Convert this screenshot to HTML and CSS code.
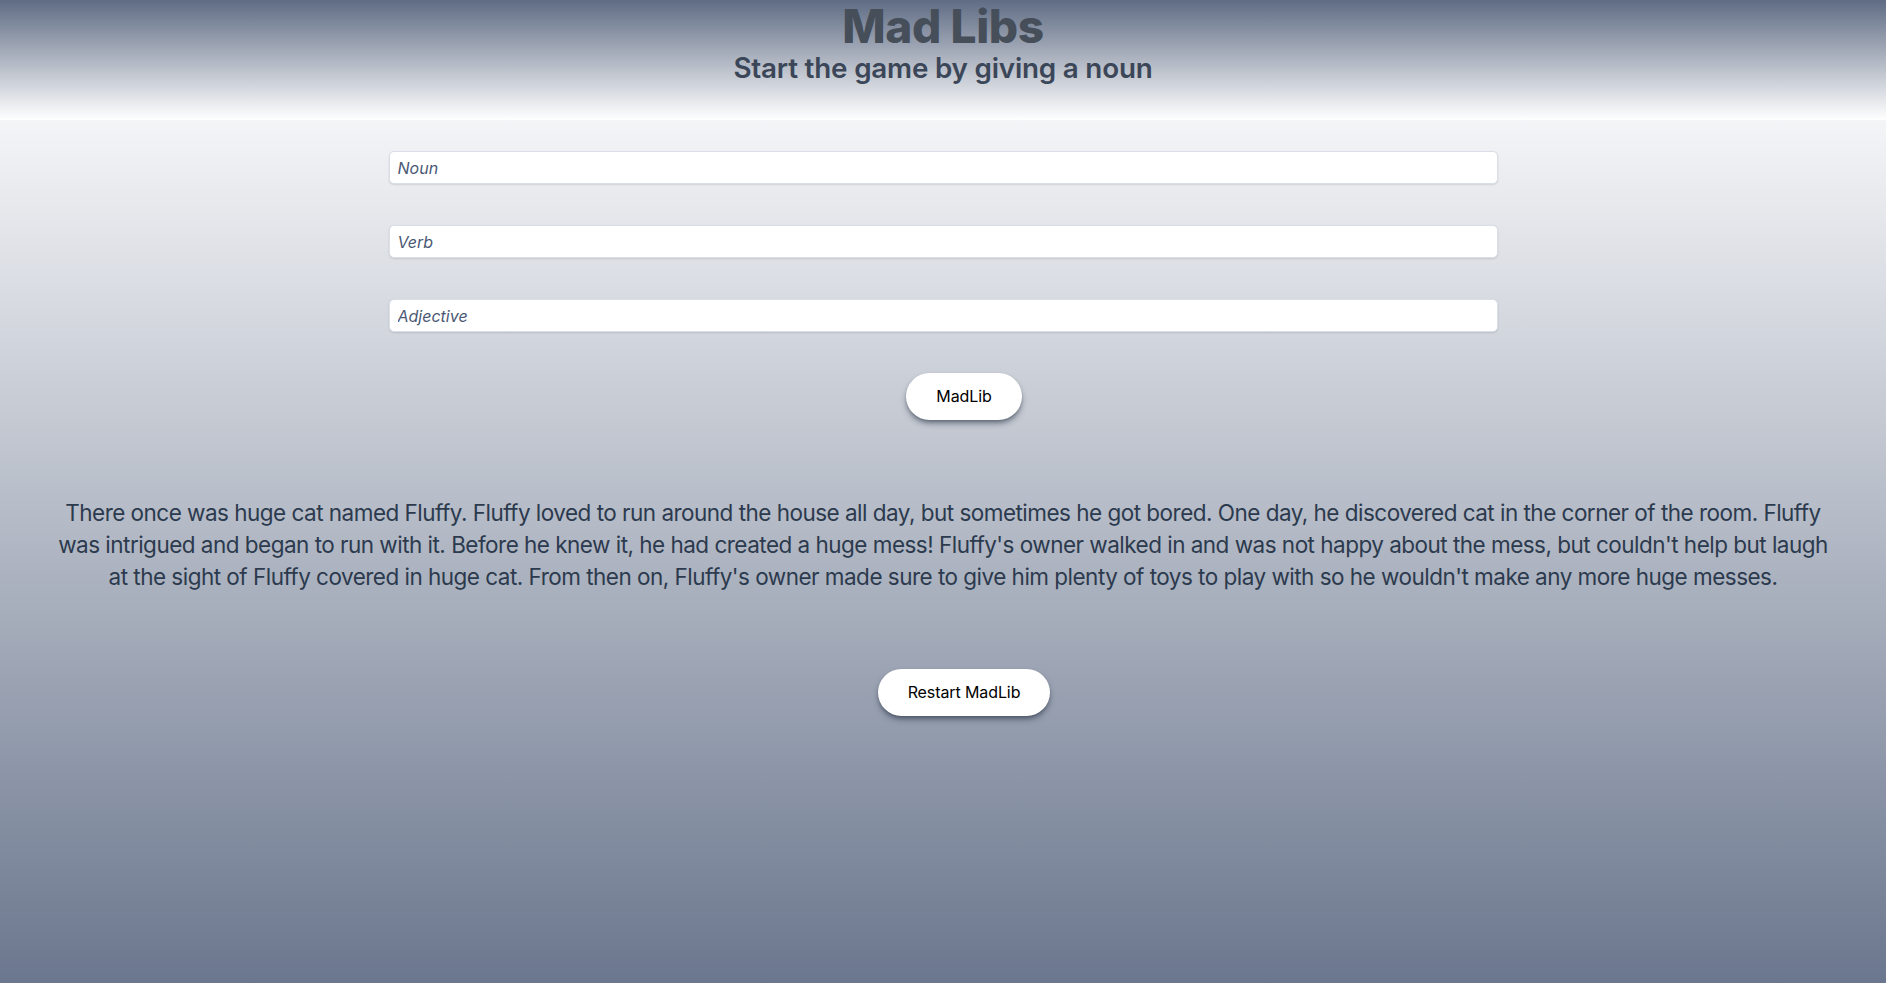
FILE: index.html
```html
<!DOCTYPE html>
<html lang="en">
<head>
<meta charset="utf-8">
<title>Mad Libs</title>
<link rel="stylesheet" href="styles.css">
</head>
<body>
<header class="header">
  <h1 class="title">Mad Libs</h1>
  <h2 class="subtitle">Start the game by giving a noun</h2>
</header>
<main class="main">
  <form class="form">
    <input class="field" type="text" placeholder="Noun">
    <input class="field" type="text" placeholder="Verb">
    <input class="field" type="text" placeholder="Adjective">
    <div class="btn-row">
      <button class="btn" type="button">MadLib</button>
    </div>
  </form>
  <p class="story">There once was huge cat named Fluffy. Fluffy loved to run around the house all day, but sometimes he got bored. One day, he discovered cat in the corner of the room. Fluffy was intrigued and began to run with it. Before he knew it, he had created a huge mess! Fluffy's owner walked in and was not happy about the mess, but couldn't help but laugh at the sight of Fluffy covered in huge cat. From then on, Fluffy's owner made sure to give him plenty of toys to play with so he wouldn't make any more huge messes.</p>
  <div class="btn-row">
    <button class="btn" type="button">Restart MadLib</button>
  </div>
</main>
</body>
</html>
```

FILE: styles.css
```css
* {
  box-sizing: border-box;
}

html, body {
  margin: 0;
  padding: 0;
  height: 100%;
}

body {
  font-family: Inter, "Noto Sans", sans-serif;
  display: flex;
  flex-direction: column;
  min-height: 983px;
}

.header {
  height: 120px;
  background: linear-gradient(to bottom, #5f6c84 0%, #ffffff 100%);
  display: flex;
  flex-direction: column;
  align-items: center;
}

.title {
  margin: 0;
  padding-top: 2px;
  font-size: 46px;
  line-height: 48px;
  font-weight: 800;
  color: #464e5a;
  letter-spacing: -0.4px;
}

.subtitle {
  margin: 0;
  font-size: 27.8px;
  line-height: 36px;
  font-weight: 600;
  color: #3b4658;
  letter-spacing: -0.2px;
}

.main {
  flex: 1;
  background: linear-gradient(to bottom, #f4f5f7 0%, #6b778e 100%);
  display: flex;
  flex-direction: column;
  align-items: center;
  padding-top: 31px;
}

.form {
  width: 1109px;
  display: flex;
  flex-direction: column;
  gap: 41px;
}

.field {
  display: block;
  width: 100%;
  height: 33px;
  padding: 0 8px;
  border: 1px solid #d9dee7;
  border-radius: 5px;
  background: #ffffff;
  box-shadow: 0 1px 2px rgba(15, 23, 42, 0.12);
  font-family: Inter, "Noto Sans", sans-serif;
  font-size: 16px;
  color: #1e293b;
  outline: none;
}

.field::placeholder {
  font-style: italic;
  color: #4a5874;
}

.btn-row {
  display: flex;
  justify-content: center;
  padding-left: 42px;
}

.btn {
  padding: 12px 30px;
  border: none;
  border-radius: 9999px;
  background: #ffffff;
  font-family: Inter, "Noto Sans", sans-serif;
  font-size: 16px;
  line-height: 23px;
  letter-spacing: -0.1px;
  color: #000000;
  box-shadow: 0 4px 6px -1px rgba(30, 41, 59, 0.55), 0 2px 4px -2px rgba(30, 41, 59, 0.4);
  cursor: pointer;
}

.story {
  width: 1790px;
  margin: 77px 0 76px;
  text-align: center;
  font-size: 22.5px;
  line-height: 32px;
  letter-spacing: -0.52px;
  color: #2c3a4e;
}
```
